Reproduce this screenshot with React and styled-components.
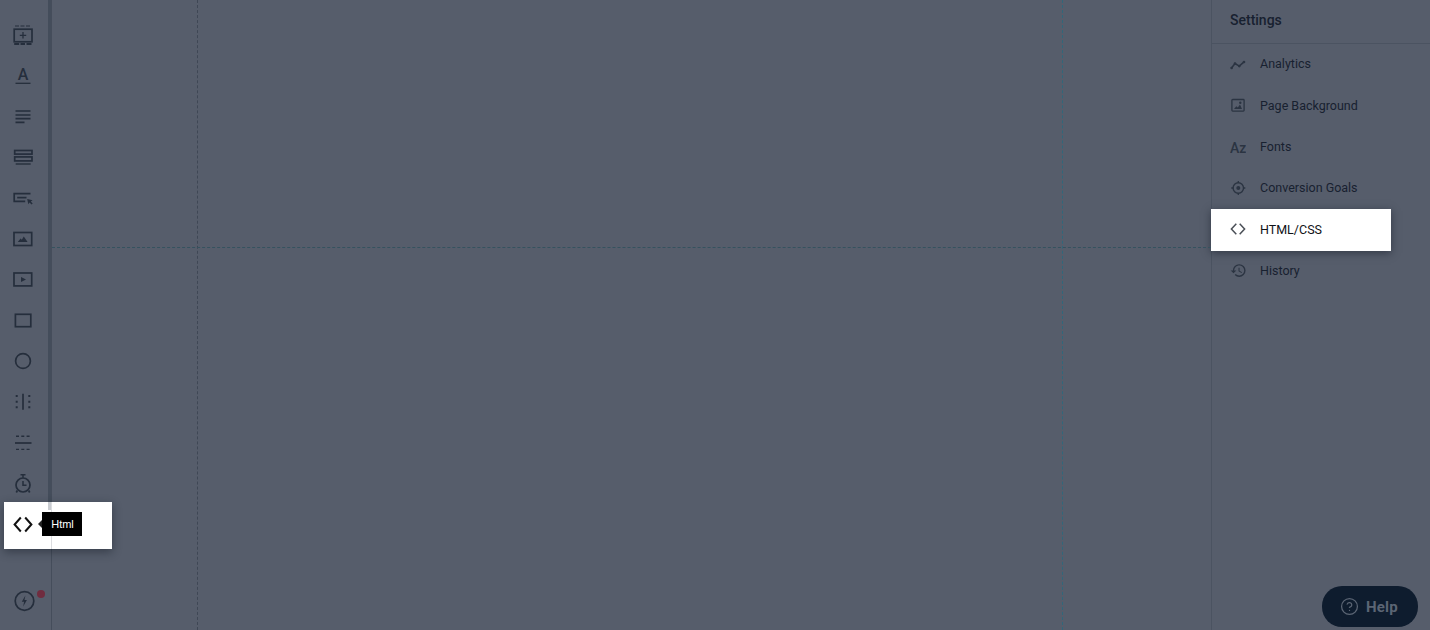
import React from "react";
import styled, { createGlobalStyle } from "styled-components";
import { CircleHelp } from "lucide-react";
import { MdHistory } from "react-icons/md";

const ink = "#252e3c";

const GlobalStyle = createGlobalStyle`
  html, body { margin: 0; padding: 0; height: 100%; overflow: hidden; }
  body { background: #565d6b; font-family: Roboto, "Liberation Sans", sans-serif; }
  #root { height: 100%; }
`;

const Page = styled.div`
  display: flex;
  height: 100vh;
  background: #565d6b;
  position: relative;
  overflow: hidden;
`;

const Sidebar = styled.aside`
  position: relative;
  flex: none;
  width: 52px;
  box-sizing: border-box;
  padding: 14.6px 6px 0 0;
  border-right: 1px solid #454d5b;
  display: flex;
  flex-direction: column;
`;

const ScrollStrip = styled.div`
  position: absolute;
  left: 48px;
  top: 0;
  width: 3px;
  height: 510px;
  background: #444d5b;
`;

const ToolItem = styled.div`
  position: relative;
  height: 40.8px;
  flex: none;
  display: flex;
  align-items: center;
  justify-content: center;
  color: ${(p) => (p.$active ? "#111" : ink)};
  margin-top: ${(p) => p.$gap || 0}px;
  svg { position: relative; z-index: 3; display: block; }
`;

const ActivePanel = styled.div`
  position: absolute;
  left: 4px;
  top: -2.2px;
  width: 108px;
  height: 47px;
  background: #fff;
  box-shadow: 0 3px 9px rgba(15, 22, 34, 0.45);
  z-index: 2;
  &::before {
    content: "";
    position: absolute;
    left: 44px;
    top: 0;
    width: 3px;
    height: 8px;
    background: #c9ccd1;
  }
  &::after {
    content: "";
    position: absolute;
    left: 47px;
    top: 0;
    width: 1px;
    height: 47px;
    background: #dcdde0;
  }
`;

const Tooltip = styled.div`
  position: absolute;
  left: 38px;
  top: 10px;
  width: 40px;
  height: 24px;
  padding-left: 1px;
  box-sizing: border-box;
  background: #000;
  color: #fff;
  font: 11px "Liberation Sans", Arial, sans-serif;
  display: flex;
  align-items: center;
  justify-content: center;
  z-index: 1;
  &::before {
    content: "";
    position: absolute;
    left: -4px;
    top: 8px;
    border-style: solid;
    border-width: 4px 4px 4px 0;
    border-color: transparent #222 transparent transparent;
  }
`;

const Badge = styled.span`
  position: absolute;
  left: 37px;
  top: 9px;
  width: 8px;
  height: 8px;
  border-radius: 50%;
  background: #702c3f;
`;

const Canvas = styled.main`
  position: relative;
  flex: 1;
`;

const GuideV = styled.div`
  position: absolute;
  top: 0;
  bottom: 0;
  left: ${(p) => p.$left}px;
  border-left: 1px dashed ${(p) => p.$color};
`;

const GuideH = styled.div`
  position: absolute;
  left: 0;
  right: 0;
  top: ${(p) => p.$top}px;
  border-top: 1px dashed #35525f;
`;

const Panel = styled.aside`
  flex: none;
  width: 218px;
  border-left: 1px solid #4b5361;
  display: flex;
  flex-direction: column;
`;

const PanelTitle = styled.div`
  height: 44px;
  flex: none;
  box-sizing: border-box;
  padding: 0 0 4px 18px;
  border-bottom: 1px solid #4b5361;
  display: flex;
  align-items: center;
  font-size: 14px;
  font-weight: 500;
  color: #182130;
`;

const Rows = styled.div`
  display: flex;
  flex-direction: column;
  margin-top: -0.4px;
`;

const Row = styled.div`
  height: 41.4px;
  width: 180px;
  margin-left: -1px;
  box-sizing: border-box;
  padding: 0 0 1px 19px;
  flex: none;
  display: flex;
  align-items: center;
  gap: 14px;
  font-size: 12.5px;
  color: ${(p) => (p.$active ? "#0f1216" : "#182130")};
  background: ${(p) => (p.$active ? "#fff" : "transparent")};
  box-shadow: ${(p) => (p.$active ? "0 2px 8px rgba(15, 22, 34, 0.5)" : "none")};
  svg { display: block; flex: none; }
`;

const RowIcon = styled.span`
  width: 16px;
  height: 16px;
  flex: none;
  display: flex;
  align-items: center;
  justify-content: center;
  color: ${(p) => (p.$active ? "#4a4f57" : "#2b3442")};
`;

const HelpButton = styled.div`
  position: absolute;
  left: 1322px;
  top: 586px;
  width: 96px;
  height: 41px;
  border-radius: 20px;
  background: #0e1c2e;
  color: #5b6574;
  display: flex;
  align-items: center;
  padding-left: 18px;
  box-sizing: border-box;
  gap: 7px;
  font-size: 15px;
  font-weight: 700;
  letter-spacing: 0.2px;
`;

const Svg = ({ children, size = 24 }) => (
  <svg width={size} height={size} viewBox={`0 0 ${size} ${size}`} fill="none" stroke="currentColor" strokeWidth="1.7">
    {children}
  </svg>
);

const tools = [
  <Svg key="section">
    <path d="M4 3h4M9.5 3h4M15 3h4" strokeWidth="1" />
    <rect x="3.2" y="6.2" width="17.8" height="12.6" />
    <path d="M12 9v6.5M8.8 12.3h6.4" strokeWidth="1.3" />
    <path d="M3.2 21h5M9.5 21h4.5M15.5 21h5" strokeWidth="1.8" />
  </Svg>,
  <Svg key="text">
    <text x="12" y="16" textAnchor="middle" fontFamily="Roboto, sans-serif" fontSize="16" fontWeight="500" fill="currentColor" stroke="none">A</text>
    <path d="M4.5 19.3h15" strokeWidth="1.3" />
  </Svg>,
  <Svg key="paragraph">
    <path d="M4.5 6h15M4.5 10h15M4.5 13.7h15M4.5 17.3h9" />
  </Svg>,
  <Svg key="columns">
    <rect x="3.7" y="5.5" width="17.3" height="3.6" />
    <rect x="3.7" y="11.9" width="17.3" height="4" />
    <path d="M4.7 19h15" strokeWidth="1.4" />
  </Svg>,
  <Svg key="button">
    <path d="M19.5 7.7H3.2v7.7h11" />
    <path d="M6.2 11.6h9.3" />
    <path d="M16.2 13l5.4 1.2-1.8 1.3 1.9 2-1.2 1.1-1.9-2-1.3 1.7z" fill="currentColor" stroke="none" />
  </Svg>,
  <Svg key="image">
    <rect x="3" y="5.5" width="17.7" height="13" />
    <path d="M6.8 15l2.8-3.6 1.2 1.4 2-3.4 3.8 5.6z" fill="currentColor" stroke="none" />
  </Svg>,
  <Svg key="video">
    <rect x="3" y="5" width="17.7" height="12.9" />
    <path d="M10 9l5 2.5-5 2.5z" fill="currentColor" stroke="none" />
  </Svg>,
  <Svg key="box">
    <rect x="4.4" y="5.3" width="15.4" height="12.4" />
  </Svg>,
  <Svg key="circle">
    <circle cx="12" cy="12" r="7.4" />
  </Svg>,
  <Svg key="vline">
    <path d="M12 3.7v16" />
    <path d="M5.7 5v2M5.7 10.7v2M5.7 16.3v2M18.3 5v2M18.3 10.7v2M18.3 16.3v2" strokeWidth="2" />
  </Svg>,
  <Svg key="hline">
    <path d="M4 12h16.5" />
    <path d="M5 5.3h3M10.3 5.3h3M15.6 5.3h3M5 18.4h3M10.3 18.4h3M15.6 18.4h3" strokeWidth="1.4" />
  </Svg>,
  <Svg key="timer">
    <circle cx="12" cy="13" r="7" />
    <path d="M9.5 2.7h5M12 2.7v3M12 9v4.2h3.5" strokeWidth="1.5" />
    <path d="M6.3 18.5l-1 2M17.7 18.5l1 2" />
  </Svg>,
];

const settings = [
  {
    label: "Analytics",
    icon: (
      <Svg size={16}>
        <path d="M1.3 12.3L5 7.5l4.3 2.6 5-4.4" strokeWidth="1.6" />
        <circle cx="1.6" cy="12" r="1.3" fill="currentColor" stroke="none" />
        <circle cx="5" cy="7.5" r="1.3" fill="currentColor" stroke="none" />
        <circle cx="9.3" cy="10.1" r="1.3" fill="currentColor" stroke="none" />
        <circle cx="14" cy="6" r="1.3" fill="currentColor" stroke="none" />
      </Svg>
    ),
  },
  {
    label: "Page Background",
    icon: (
      <Svg size={16}>
        <rect x="1.9" y="2.5" width="12.2" height="11.6" rx="0.8" strokeWidth="1.3" />
        <path d="M4 12l2.3-2.8 1.5 1.3 2.2-2.9 2 4.4z" fill="currentColor" stroke="none" />
        <circle cx="10.3" cy="5.8" r="1.2" fill="currentColor" stroke="none" />
      </Svg>
    ),
  },
  {
    label: "Fonts",
    icon: (
      <svg width="16" height="16" viewBox="0 0 16 16">
        <text x="0" y="13.5" fontFamily="Roboto, sans-serif" fontSize="14" fontWeight="500" fill="currentColor">Az</text>
      </svg>
    ),
  },
  {
    label: "Conversion Goals",
    icon: (
      <Svg size={16}>
        <circle cx="8.3" cy="8" r="5.2" strokeWidth="1.4" />
        <circle cx="8.3" cy="8" r="2" fill="currentColor" stroke="none" />
        <path d="M8.3 1v2M8.3 13v2M1.3 8h2M13.3 8h2" strokeWidth="1.3" />
      </Svg>
    ),
  },
  {
    label: "HTML/CSS",
    active: true,
    icon: (
      <Svg size={16}>
        <path d="M6.3 2.8L1.4 8l4.9 5.2M9.7 2.8L14.6 8l-4.9 5.2" strokeWidth="1.5" />
      </Svg>
    ),
  },
  { label: "History", icon: <MdHistory size={17} /> },
];

export default function App() {
  return (
    <Page>
      <GlobalStyle />
      <Sidebar>
        <ScrollStrip />
        {tools.map((icon) => (
          <ToolItem key={icon.key}>{icon}</ToolItem>
        ))}
        <ToolItem $active>
          <ActivePanel>
            <Tooltip>Html</Tooltip>
          </ActivePanel>
          <Svg>
            <path d="M9.8 4.5L3.6 11.5l6.2 7M14.2 4.5l6.2 7-6.2 7" strokeWidth="2" />
          </Svg>
        </ToolItem>
        <ToolItem $gap={36}>
          <Svg>
            <circle cx="13.5" cy="12" r="9.3" strokeWidth="1.7" />
            <path d="M14.4 6.6l-3.6 6.2h2.3l-.9 4.6 3.7-6.4h-2.4z" fill="currentColor" stroke="none" />
          </Svg>
          <Badge />
        </ToolItem>
      </Sidebar>
      <Canvas>
        <GuideV $left={145} $color="#3f4755" />
        <GuideV $left={1010} $color="#31677a" />
        <GuideH $top={247} />
      </Canvas>
      <Panel>
        <PanelTitle>Settings</PanelTitle>
        <Rows>
          {settings.map((s) => (
            <Row key={s.label} $active={s.active}>
              <RowIcon $active={s.active}>{s.icon}</RowIcon>
              {s.label}
            </Row>
          ))}
        </Rows>
      </Panel>
      <HelpButton>
        <CircleHelp size={19} strokeWidth={1.6} />
        Help
      </HelpButton>
    </Page>
  );
}
